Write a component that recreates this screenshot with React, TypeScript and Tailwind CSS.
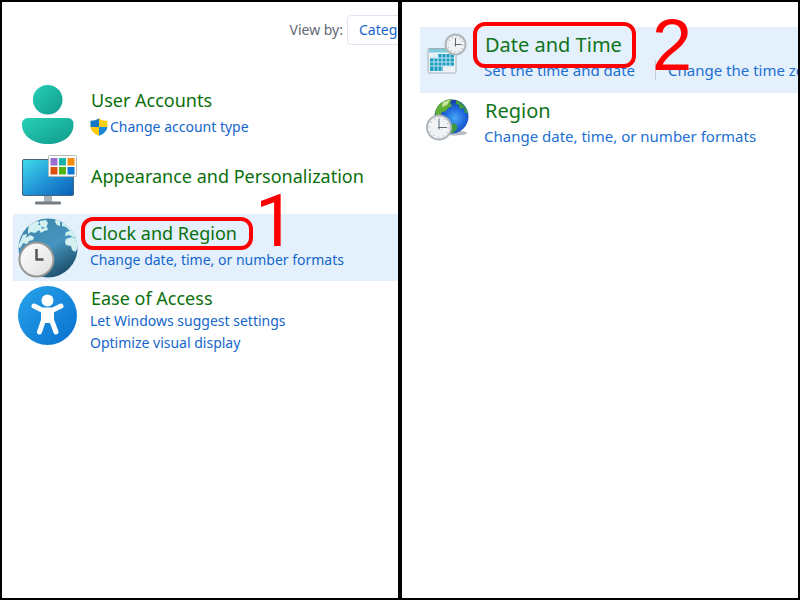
import type { ReactNode } from "react";

function UserIcon() {
  return (
    <svg viewBox="0 0 60 60" className="size-15 shrink-0" aria-hidden="true">
      <defs>
        <linearGradient id="teal" x1="0" y1="0" x2="1" y2="1">
          <stop offset="0" stopColor="#27d0b8" />
          <stop offset="1" stopColor="#109a8a" />
        </linearGradient>
      </defs>
      <circle cx="29.700" cy="14.800" r="14.800" fill="url(#teal)" />
      <path d="M10 33h40q5.500 0 5.500 6.500C55.500 51 45 59 30 59S4 51 4 39.500Q4 33 10 33z" fill="url(#teal)" />
    </svg>
  );
}

function ShieldIcon() {
  return (
    <svg viewBox="0 0 18 18" className="size-[18px] shrink-0" aria-hidden="true">
      <defs>
        <clipPath id="shield">
          <path d="M9 .3C11 2 14 2.800 17.500 2.800V8c0 4.500-3.500 8-8.500 9.800C4 16 .5 12.500.5 8V2.800C4 2.800 7 2 9 .3z" />
        </clipPath>
      </defs>
      <g clipPath="url(#shield)">
        <path d="M0 0h9v9H0z" fill="#1478c4" />
        <path d="M9 0h9v9H9z" fill="#fdd017" />
        <path d="M0 9h9v9H0z" fill="#ffc90e" />
        <path d="M9 9h9v9H9z" fill="#1a8ad8" />
      </g>
    </svg>
  );
}

function MonitorIcon() {
  return (
    <svg viewBox="0 0 60 60" className="size-15 shrink-0" aria-hidden="true">
      <defs>
        <linearGradient id="screen" x1="0" y1="0" x2="1" y2="1">
          <stop offset="0" stopColor="#3fdcea" />
          <stop offset=".5" stopColor="#2398d8" />
          <stop offset="1" stopColor="#0a5fb8" />
        </linearGradient>
      </defs>
      <path d="M26 43h8v9h-8z" fill="#a9b2b9" />
      <rect x="17" y="49.500" width="26" height="3" rx="1" fill="#727c85" />
      <rect x="4.500" y="7.500" width="51" height="36" rx="1.500" fill="url(#screen)" stroke="#46657a" />
      <rect x="30.500" y="3.500" width="28" height="21" rx="1" fill="#fff" stroke="#b8b8b8" />
      <path d="M32.500 6h7v7.500h-7z" fill="#9a6fd0" />
      <path d="M41 6h7v7.500h-7z" fill="#1bb3a5" />
      <path d="M49.500 6h7v7.500h-7z" fill="#f28c0a" />
      <path d="M32.500 15h7v7.500h-7z" fill="#dd5010" />
      <path d="M41 15h7v7.500h-7z" fill="#4fb50e" />
      <path d="M49.500 15h7v7.500h-7z" fill="#0a78d8" />
    </svg>
  );
}

function ClockGlobeIcon() {
  return (
    <svg viewBox="0 0 60 60" className="size-15 shrink-0" aria-hidden="true">
      <defs>
        <linearGradient id="ocean" x1=".2" y1="0" x2=".8" y2="1">
          <stop offset="0" stopColor="#3e86ab" />
          <stop offset=".5" stopColor="#4695c0" />
          <stop offset="1" stopColor="#17455f" />
        </linearGradient>
        <linearGradient id="dial" x1="0" y1="0" x2="1" y2="1">
          <stop offset="0" stopColor="#fff" />
          <stop offset="1" stopColor="#dedede" />
        </linearGradient>
        <clipPath id="globe">
          <circle cx="30" cy="30" r="29.500" />
        </clipPath>
      </defs>
      <circle cx="30" cy="30" r="29.500" fill="url(#ocean)" />
      <g clipPath="url(#globe)" fill="#d3f0f1">
        <path d="M11 7l7-4 4 1-2 3 3 0 1 4 5-2 1 3-4 1-3 2-2-3-4 3-4-1-3 2 0-4z" />
        <path d="M5 17l4-1-1 4 4-3 4 2-1 3-4 1-2 3-4-1-2 4-4 2z" />
        <path d="M22 3l6-1 2 3-2 5-4-1-2-3zM38 1l4 2 0 5-3-1-2-3z" />
        <path d="M44 4l9 6 6 10-4-1-4-2-4 1 1-4 4-1-4-4-4-1z" />
        <path d="M48 21l6-2 6 2v9l-3 4-3-2-1-4-5-1-1-3z" />
      </g>
      <circle cx="18.500" cy="41.500" r="17" fill="url(#dial)" stroke="#969696" strokeWidth="2" />
      <path d="M18.500 31v10.500h7" fill="none" stroke="#555" strokeWidth="2.500" />
    </svg>
  );
}

function AccessIcon() {
  return (
    <svg viewBox="0 0 60 60" className="size-15 shrink-0" aria-hidden="true">
      <defs>
        <linearGradient id="access" x1="0" y1="0" x2="1" y2="1">
          <stop offset="0" stopColor="#28a4ea" />
          <stop offset="1" stopColor="#0870cf" />
        </linearGradient>
      </defs>
      <circle cx="29.500" cy="29.500" r="29.500" fill="url(#access)" />
      <circle cx="29.500" cy="14.500" r="6" fill="#fff" />
      <path
        d="M16 20l8 4h11l8-4M25.500 26v8L21.500 46M33.500 26v8L38 46"
        fill="none"
        stroke="#fff"
        strokeWidth="5"
        strokeLinecap="round"
        strokeLinejoin="round"
      />
      <path d="M23 23h13v13l-2 1h-9l-2-1z" fill="#fff" />
    </svg>
  );
}

function ClockFace({ cx, cy, r }: { cx: number; cy: number; r: number }) {
  return (
    <g transform={`translate(${cx} ${cy})`}>
      <circle r={r} fill="#f0f3f5" stroke="#b0b6ba" strokeWidth="2" />
      <circle r={r - 2.500} fill="none" stroke="#b4bbc1" strokeWidth="1.500" strokeDasharray={`1 ${((r - 2.500) * 2 * Math.PI) / 12 - 1}`} />
      <path d={`M0 ${3.500 - r}V2M-1 0H${r - 4}`} stroke="#5d6c78" fill="none" />
    </g>
  );
}

function CalendarIcon() {
  return (
    <svg viewBox="-1 0 44 48" className="h-12 w-11 shrink-0" aria-hidden="true">
      <rect x="3" y="17.500" width="28" height="24.500" rx="1" fill="#eef3f6" stroke="#a4b0b8" />
      <path d="M4 18h26v3.500H4z" fill="#7fcbdc" />
      <path d="M13 23h16v4H13zM5 27h24v8H5zM5 35h13v5H5z" fill="#1f9cc0" />
      <path d="M4 27h25M4 31h25M4 35h25M9 23v17M13 23v17M17 23v17M21 23v12M25 23v12" stroke="#bfe6f2" />
      <ClockFace cx={30.500} cy={13.500} r={10} />
    </svg>
  );
}

function RegionIcon() {
  return (
    <svg viewBox="-3 0 44 48" className="h-12 w-11 shrink-0 overflow-visible" aria-hidden="true">
      <defs>
        <radialGradient id="earth" cx=".6" cy=".55" r=".6">
          <stop offset="0" stopColor="#48a8f4" />
          <stop offset=".5" stopColor="#1f66dc" />
          <stop offset="1" stopColor="#152f91" />
        </radialGradient>
      </defs>
      <ellipse cx="27" cy="36" rx="13" ry="2.500" fill="#b4bbc2" />
      <circle cx="24.500" cy="19.500" r="17" fill="url(#earth)" />
      <path d="M8 15q3-9 11-12l6-1-2 4 2 3-4 2-2 3-4 1-2 4-4 0z" fill="#5fae35" />
      <path d="M29 3q9 4 12 13l-3 0-1-5-4 1-1-4-3-1zM23 30l3-4 4 2 0 4-4 4-4 0z" fill="#3f9a3a" />
      <path d="M16 5l7-2-3 5-5 2z" fill="#cbe6a2" />
      <ClockFace cx={12} cy={30.500} r={12} />
    </svg>
  );
}

function Highlight({ children, className }: { children: ReactNode; className: string }) {
  return (
    <span className="relative block w-fit">
      {children}
      <span className={`pointer-events-none absolute z-10 border-4 border-[#fe0000] ${className}`} />
    </span>
  );
}

function Category({ icon, title, children, className = "" }: { icon: ReactNode; title: ReactNode; children?: ReactNode; className?: string }) {
  return (
    <li className={`flex gap-3 pl-[5px] ${className}`}>
      {icon}
      <div className="whitespace-nowrap text-sm leading-[22px] text-[#1466cc]">
        <h2 className="pl-px text-lg leading-6 text-[#0b700b]">
          <a href="#">{title}</a>
        </h2>
        {children}
      </div>
    </li>
  );
}

function Applet({ icon, title, children, className = "" }: { icon: ReactNode; title: ReactNode; children: ReactNode; className?: string }) {
  return (
    <li className={`flex h-[66px] gap-4 pl-1 pt-1 ${className}`}>
      {icon}
      <div className="whitespace-nowrap text-[15px] leading-[22px] text-[#1c6fd2]">
        <h2 className="pl-px text-xl leading-7 text-[#0f7420]">
          <a href="#">{title}</a>
        </h2>
        {children}
      </div>
    </li>
  );
}

export default function App() {
  return (
    <main className="grid min-h-screen grid-cols-2 gap-1 border-2 border-black bg-black font-['Noto_Sans','Open_Sans',sans-serif]">
      <section className="overflow-hidden bg-white pl-[11px] pt-[13px]">
        <div className="flex h-[30px] items-center justify-end gap-1 text-sm text-[#626873]">
          <label htmlFor="view" className="whitespace-nowrap">View by:</label>
          <div className="w-[51px] shrink-0">
            <select id="view" className="h-[30px] w-28 appearance-none rounded border border-[#dbe6f2] bg-white pl-[11px] text-sm text-[#1466cc]">
              <option>Category</option>
              <option>Large icons</option>
              <option>Small icons</option>
            </select>
          </div>
        </div>
        <ul className="pt-10">
          <Category icon={<UserIcon />} title="User Accounts" className="h-[65px] items-start *:last:pt-[3px]">
            <a href="#" className="mt-1 flex items-center gap-0.5">
              <ShieldIcon />
              Change account type
            </a>
          </Category>
          <Category icon={<MonitorIcon />} title="Appearance and Personalization" className="h-16 items-center pb-3 *:first:mt-3" />
          <Category
            icon={<ClockGlobeIcon />}
            title={<Highlight className="-left-[10px] -right-4 -top-1 -bottom-[5px] rounded-xl">Clock and Region</Highlight>}
            className="relative h-[67px] items-center bg-[#e4f1fd] *:last:-mt-1"
          >
            <a href="#" className="mt-1 block">Change date, time, or number formats</a>
            <span className="absolute -top-7 left-[242px] font-[Roboto,sans-serif] text-7xl text-[#fe0000]">1</span>
          </Category>
          <Category icon={<AccessIcon />} title="Ease of Access" className="pt-[5px]">
            <a href="#" className="block">Let Windows suggest settings</a>
            <a href="#" className="block">Optimize visual display</a>
          </Category>
        </ul>
      </section>

      <section className="overflow-hidden bg-white pl-[18px] pt-[25px]">
        <ul>
          <Applet
            icon={<CalendarIcon />}
            title={<Highlight className="-left-3 -right-[14px] -top-[9px] -bottom-[9px] rounded-xl">Date and Time</Highlight>}
            className="relative bg-[#e4f1fd]"
          >
            <a href="#">Set the time and date</a>
            <a href="#" className="ml-5 border-l border-[#c5cbd2] pl-3">Change the time zone</a>
            <span className="absolute -top-[18px] left-[232px] z-10 font-['Liberation_Sans',Arial,sans-serif] text-7xl text-[#fe0000]">2</span>
          </Applet>
          <Applet icon={<RegionIcon />} title="Region">
            <a href="#">Change date, time, or number formats</a>
          </Applet>
        </ul>
      </section>
    </main>
  );
}
